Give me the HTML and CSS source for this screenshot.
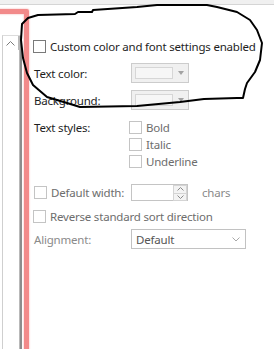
FILE: index.html
```html
<!DOCTYPE html>
<html lang="en">
<head>
    <meta charset="UTF-8">
    <title>Color settings</title>
    <link rel="stylesheet" href="styles.css">
</head>
<body>
    <div class="topbar"></div>

    <div class="window">
        <div class="side">
            <div class="list">
                <div class="scroll-up">
                    <svg width="9" height="5" viewBox="0 0 9 5"><path d="M0.5 4.5 L4.5 0.5 L8.5 4.5" fill="none" stroke="#7a7a7a"/></svg>
                </div>
            </div>
        </div>

        <div class="panel">
            <div class="check-row first">
                <span class="box"></span>
                <span>Custom color and font settings enabled</span>
            </div>

            <div class="row text-color">
                <span class="label">Text color:</span>
                <div class="color-combo">
                    <span class="swatch"></span>
                    <span class="tri"></span>
                </div>
            </div>

            <div class="row background">
                <span class="label">Background:</span>
                <div class="color-combo">
                    <span class="swatch"></span>
                    <span class="tri"></span>
                </div>
            </div>

            <div class="row styles">
                <span class="label">Text styles:</span>
                <div class="style-list">
                    <div class="check-row off"><span class="box"></span><span>Bold</span></div>
                    <div class="check-row off"><span class="box"></span><span>Italic</span></div>
                    <div class="check-row off"><span class="box"></span><span>Underline</span></div>
                </div>
            </div>

            <div class="row width-row">
                <div class="check-row off label"><span class="box"></span><span>Default width:</span></div>
                <div class="spin">
                    <span class="spin-text"></span>
                    <span class="spin-btns">
                        <span class="spin-btn"><svg width="7" height="4" viewBox="0 0 7 4"><path d="M0.5 3.5 L3.5 0.5 L6.5 3.5" fill="none" stroke="#8a8a8a"/></svg></span>
                        <span class="spin-btn"><svg width="7" height="4" viewBox="0 0 7 4"><path d="M0.5 0.5 L3.5 3.5 L6.5 0.5" fill="none" stroke="#8a8a8a"/></svg></span>
                    </span>
                </div>
                <span class="unit">chars</span>
            </div>

            <div class="check-row off reverse">
                <span class="box"></span>
                <span>Reverse standard sort direction</span>
            </div>

            <div class="row align-row">
                <span class="label dim">Alignment:</span>
                <div class="select">
                    <span>Default</span>
                    <svg width="8" height="5" viewBox="0 0 8 5"><path d="M0.5 0.5 L4 4 L7.5 0.5" fill="none" stroke="#a8a8a8"/></svg>
                </div>
            </div>
        </div>

        <div class="highlight"></div>
    </div>

    <svg class="scribble" width="274" height="349" viewBox="0 0 274 349">
        <path d="M22 24 L28 18 L38 15 L75 14 L78 12 L92 12 L93 10 L137 7 L157 5 L207 5 L217 7 L237 12 L250 20 L257 30 L262 43 L260 60 L255 72 L247 83 L245 89 L243 98 L237 98 L204 99 L180 102 L137 106 L80 107 L67 103 L47 97 L33 85 L27 73 L23 58 L21 40 Z"
              fill="none" stroke="#000" stroke-width="2" stroke-linejoin="round"/>
    </svg>
</body>
</html>
```

FILE: styles.css
```css
body {
    margin: 0;
    width: 274px;
    height: 349px;
    overflow: hidden;
    position: relative;
    background: #fff;
    font-family: "Noto Sans", "Open Sans", sans-serif;
    font-size: 11.5px;
    letter-spacing: -0.2px;
    color: #1e1e1e;
}

/* Oberer Rand */
.topbar {
    height: 4px;
    background: #f0f0f0;
    border-bottom: 1px solid #d5d5d5;
}

.window {
    position: relative;
    display: flex;
    height: 344px;
    overflow: hidden;
}

/* Liste links */
.side {
    width: 22px;
    padding-top: 30px;
    box-sizing: border-box;
}

.list {
    margin-left: 2px;
    width: 20px;
    height: 314px;
    box-sizing: border-box;
    border-left: 1px solid #cfcfcf;
    border-top: 1px solid #dcdcdc;
    border-right: 2px solid #8c8c8c;
    display: flex;
}

.scroll-up {
    width: 15px;
    height: 14px;
    border-right: 1px solid #b9b9b9;
    display: flex;
    align-items: center;
    justify-content: center;
}

.list::after {
    content: "";
    width: 1px;
    border-right: 1px solid #b9b9b9;
    margin-left: -1px;
}

/* Einstellungen */
.panel {
    display: flex;
    flex-direction: column;
    padding-left: 11px;
    padding-top: 35px;
}

.row {
    display: flex;
    align-items: center;
}

.label {
    width: 98px;
    padding-left: 1px;
    box-sizing: border-box;
    flex-shrink: 0;
}

.check-row {
    display: flex;
    align-items: center;
    height: 13px;
    white-space: nowrap;
}

.box {
    width: 13px;
    height: 13px;
    box-sizing: border-box;
    border: 1px solid #7a7a7a;
    background: #fff;
    margin-right: 4px;
    flex-shrink: 0;
}

.check-row.off {
    color: #6d6d6d;
}

.check-row.off .box {
    border-color: #c4c4c4;
}

.text-color {
    margin-top: 10px;
}

.background {
    margin-top: 7px;
}

.color-combo {
    width: 58px;
    height: 20px;
    box-sizing: border-box;
    border: 1px solid #cccccc;
    background: #f0f0f0;
    display: flex;
    align-items: center;
    padding-left: 3px;
}

.swatch {
    width: 38px;
    height: 12px;
    box-sizing: border-box;
    border: 1px solid #d6d6d6;
    background: #f6f6f6;
}

.tri {
    margin-left: 5px;
    width: 0;
    height: 0;
    border-left: 3.5px solid transparent;
    border-right: 3.5px solid transparent;
    border-top: 4px solid #a2a2a2;
}

.styles {
    margin-top: 11px;
    align-items: flex-start;
}

.styles .label {
    line-height: 13px;
}

.style-list {
    display: flex;
    flex-direction: column;
    gap: 4px;
    margin-left: -2px;
}

.width-row {
    margin-top: 16px;
    height: 17px;
}

.spin {
    width: 57px;
    height: 17px;
    box-sizing: border-box;
    border: 1px solid #c4c4c4;
    background: #fff;
    display: flex;
    justify-content: flex-end;
}

.spin-btns {
    display: flex;
    flex-direction: column;
    width: 14px;
}

.spin-btn {
    flex: 1;
    display: flex;
    align-items: center;
    justify-content: center;
    background: #f3f3f3;
    border: 1px solid #d4d4d4;
    margin: 0 0 -1px 0;
}

.unit {
    margin-left: 14px;
    color: #8a8a8a;
}

.reverse {
    margin-top: 9px;
}

.align-row {
    margin-top: 6px;
}

.dim {
    color: #8a8a8a;
}

.select {
    width: 115px;
    height: 20px;
    box-sizing: border-box;
    border: 1px solid #c2c2c2;
    display: flex;
    align-items: center;
    justify-content: space-between;
    padding: 0 5px 0 4px;
    color: #555;
}

/* Rote Markierung */
.highlight {
    position: absolute;
    left: -20px;
    top: 4px;
    width: 49px;
    height: 400px;
    box-sizing: border-box;
    border: 5px solid #f28a8a;
    border-radius: 2px;
    box-shadow: 0 0 2px rgba(240, 128, 128, 0.7), inset 0 0 2px rgba(240, 128, 128, 0.7);
}

.scribble {
    position: absolute;
    top: 0;
    left: 0;
}
```
